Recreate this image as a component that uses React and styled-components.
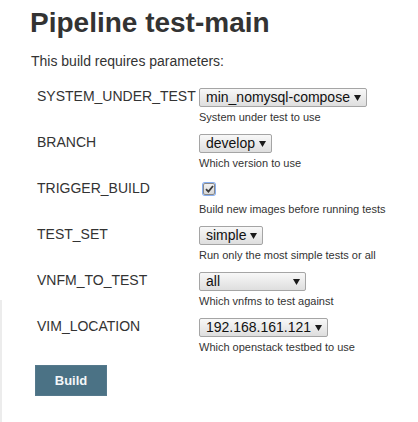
import React from 'react';
import styled, { createGlobalStyle } from 'styled-components';

const GlobalStyle = createGlobalStyle`
  html, body {
    margin: 0;
    padding: 0;
    background: #fff;
  }
  body {
    font-family: 'Liberation Sans', Arial, sans-serif;
    color: #333;
  }
`;

const Page = styled.div`
  display: flex;
  min-height: 422px;
`;

// Bord de la barre latérale (visible seulement en bas)
const SideEdge = styled.div`
  width: 2px;
  display: flex;
  flex-direction: column;

  &::after {
    content: '';
    flex: 1;
    margin-top: 300px;
    background: #ececec;
  }
`;

const Main = styled.div`
  flex: 1;
  padding: 7px 0 0 28px;
`;

const Title = styled.h1`
  margin: 0;
  font-size: 28px;
  line-height: 32px;
  font-weight: bold;
  color: #333;
`;

const Intro = styled.p`
  margin: 13px 0 0 1px;
  font-size: 14px;
  line-height: 18px;
`;

const Params = styled.div`
  display: grid;
  grid-template-columns: 162px auto;
  margin: 18px 0 0 7px;
`;

const Label = styled.div`
  font-size: 14px;
  line-height: 17px;
  color: #333;
  white-space: nowrap;
`;

const Control = styled.div`
  display: flex;
  flex-direction: column;
  align-items: flex-start;
  padding-bottom: 10px;
`;

const SelectBox = styled.div`
  box-sizing: border-box;
  height: 19px;
  width: ${(p) => (p.$width ? `${p.$width}px` : 'auto')};
  display: inline-flex;
  align-items: center;
  justify-content: space-between;
  gap: 4px;
  padding: 0 5px 0 6px;
  border: 1px solid #a5a5a5;
  border-radius: 2px;
  background: linear-gradient(#f8f8f8, #dedede);
  font-size: 14px;
  line-height: 17px;
  color: #111;
  white-space: nowrap;
`;

const CheckWrap = styled.div`
  height: 19px;
  display: flex;
  align-items: flex-start;
  padding: 3px 0 0 4px;
  box-sizing: border-box;
`;

const CheckBox = styled.div`
  box-sizing: border-box;
  width: 12px;
  height: 12px;
  border: 1px solid #8a8a8a;
  border-radius: 2px;
  background: linear-gradient(#f2f2f2, #d8d8d8);
  box-shadow: 0 0 0 1px #86aef0;
  display: flex;
  align-items: center;
  justify-content: center;
`;

const Hint = styled.div`
  margin-top: 4px;
  font-size: 11px;
  line-height: 13px;
  color: #333;
  white-space: nowrap;
`;

const BuildButton = styled.button`
  margin: 1px 0 0 5px;
  width: 72px;
  height: 31px;
  border: 1px solid #55798c;
  background: #4b7285;
  color: #f4f7f9;
  font-family: 'Liberation Sans', Arial, sans-serif;
  font-weight: bold;
  font-size: 13px;
  padding: 0;
  cursor: pointer;
`;

const Arrow = () => (
  <svg width="7" height="6" viewBox="0 0 7 6">
    <path d="M0 0 L7 0 L3.5 6 Z" fill="#1a1a1a" />
  </svg>
);

const Tick = () => (
  <svg width="9" height="8" viewBox="0 0 9 8">
    <path d="M1 4.2 L3.4 6.6 L8 1" stroke="#3a3a3a" strokeWidth="1.8" fill="none" />
  </svg>
);

const params = [
  { name: 'SYSTEM_UNDER_TEST', value: 'min_nomysql-compose', hint: 'System under test to use' },
  { name: 'BRANCH', value: 'develop', hint: 'Which version to use' },
  { name: 'TRIGGER_BUILD', checkbox: true, hint: 'Build new images before running tests' },
  { name: 'TEST_SET', value: 'simple', hint: 'Run only the most simple tests or all' },
  { name: 'VNFM_TO_TEST', value: 'all', width: 107, hint: 'Which vnfms to test against' },
  { name: 'VIM_LOCATION', value: '192.168.161.121', hint: 'Which openstack testbed to use' },
];

const App = () => {
  return (
    <Page>
      <GlobalStyle />
      <SideEdge />
      <Main>
        <Title>Pipeline test-main</Title>
        <Intro>This build requires parameters:</Intro>

        <Params>
          {params.map((p) => (
            <React.Fragment key={p.name}>
              <Label>{p.name}</Label>
              <Control>
                {p.checkbox ? (
                  <CheckWrap>
                    <CheckBox>
                      <Tick />
                    </CheckBox>
                  </CheckWrap>
                ) : (
                  <SelectBox $width={p.width}>
                    <span>{p.value}</span>
                    <Arrow />
                  </SelectBox>
                )}
                <Hint>{p.hint}</Hint>
              </Control>
            </React.Fragment>
          ))}
        </Params>

        <BuildButton>Build</BuildButton>
      </Main>
    </Page>
  );
};

export default App;
